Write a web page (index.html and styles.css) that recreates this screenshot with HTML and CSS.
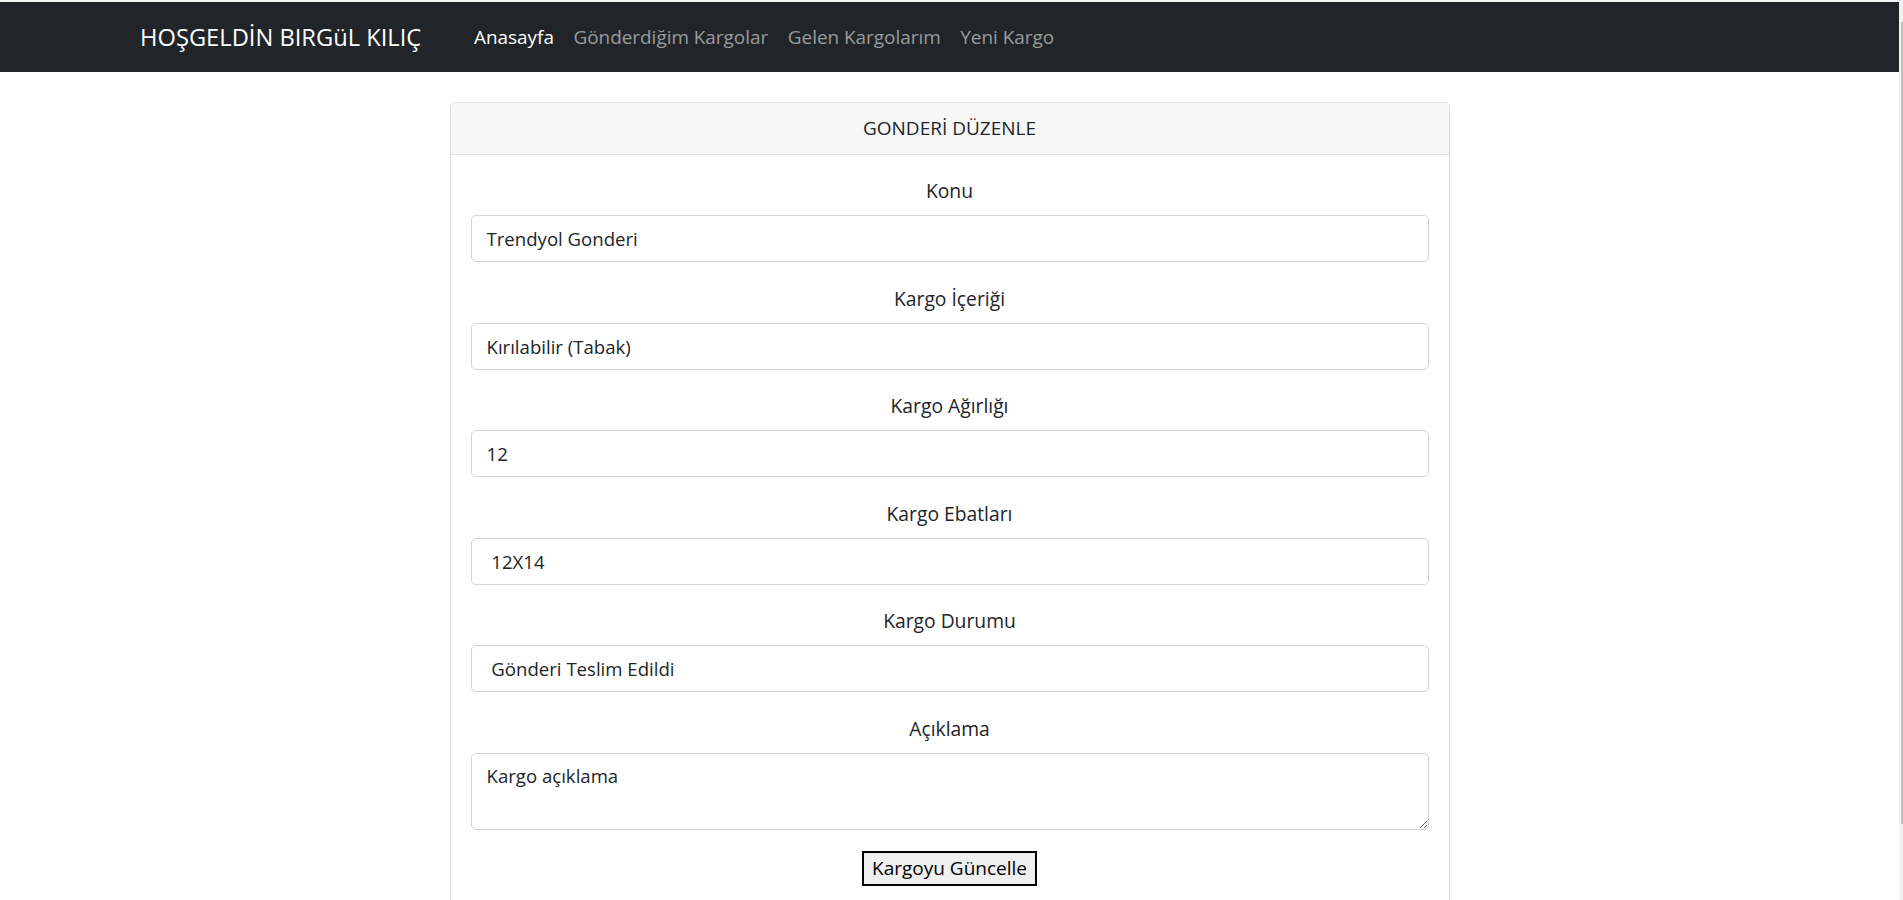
FILE: index.html
```html
<!DOCTYPE html>
<html lang="tr">
<head>
<meta charset="utf-8">
<title>Gönderi Düzenle</title>
<link rel="stylesheet" href="styles.css">
</head>
<body>
<div class="window">
  <div class="viewport">
    <div class="topstrip"></div>
    <nav class="navbar">
      <div class="container nav-inner">
        <a class="brand" href="#">HOŞGELDİN BIRGüL KILIÇ</a>
        <ul class="nav-links">
          <li><a class="nav-link active" href="#">Anasayfa</a></li>
          <li><a class="nav-link" href="#">Gönderdiğim Kargolar</a></li>
          <li><a class="nav-link" href="#">Gelen Kargolarım</a></li>
          <li><a class="nav-link" href="#">Yeni Kargo</a></li>
        </ul>
      </div>
    </nav>
    <main class="content">
      <section class="card">
        <header class="card-header">GONDERİ DÜZENLE</header>
        <form class="card-body">
          <div class="field">
            <label class="field-label">Konu</label>
            <input class="field-input" type="text" value="Trendyol Gonderi">
          </div>
          <div class="field">
            <label class="field-label">Kargo İçeriği</label>
            <input class="field-input" type="text" value="Kırılabilir (Tabak)">
          </div>
          <div class="field">
            <label class="field-label">Kargo Ağırlığı</label>
            <input class="field-input" type="text" value="12">
          </div>
          <div class="field">
            <label class="field-label">Kargo Ebatları</label>
            <input class="field-input" type="text" value=" 12X14">
          </div>
          <div class="field">
            <label class="field-label">Kargo Durumu</label>
            <input class="field-input" type="text" value=" Gönderi Teslim Edildi">
          </div>
          <div class="field">
            <label class="field-label">Açıklama</label>
            <textarea class="field-textarea">Kargo açıklama</textarea>
          </div>
          <div class="actions">
            <button class="submit" type="button">Kargoyu Güncelle</button>
          </div>
        </form>
      </section>
    </main>
  </div>
  <div class="scrollbar"><div class="thumb"></div></div>
</div>
</body>
</html>
```

FILE: styles.css
```css
* { box-sizing: border-box; }

html, body {
  margin: 0;
  padding: 0;
  height: 900px;
  overflow: hidden;
  background: #ffffff;
}

body {
  font-family: "Open Sans", "Noto Sans", sans-serif;
  font-size: 19px;
  color: #212529;
}

.window {
  display: flex;
  height: 900px;
}

.viewport {
  flex: 1;
  min-width: 0;
  background: #ffffff;
}

.topstrip {
  height: 2px;
  background: #f3f3f3;
}

.navbar {
  height: 70px;
  background: #212529;
  display: flex;
  align-items: center;
}

.container {
  width: 100%;
  max-width: 1619px;
  margin: 0 auto;
}

.nav-inner {
  display: flex;
  align-items: center;
}

.brand {
  color: #ffffff;
  text-decoration: none;
  font-size: 23.7px;
  line-height: 36px;
  margin-right: 43px;
  white-space: nowrap;
}

.nav-links {
  display: flex;
  list-style: none;
  margin: 0;
  padding: 0;
}

.nav-link {
  display: block;
  padding: 1px 9.8px 0;
  font-size: 18.9px;
  line-height: 29px;
  color: rgba(255, 255, 255, 0.55);
  text-decoration: none;
  white-space: nowrap;
}

.nav-link.active {
  color: #ffffff;
}

.content {
  padding-top: 30px;
}

.card {
  width: 1000px;
  margin: 0 auto;
  border: 1px solid #dfdfdf;
  border-radius: 5px;
  background: #ffffff;
}

.card-header {
  padding: 11px 20px;
  line-height: 29px;
  font-size: 19px;
  text-align: center;
  background: #f7f7f7;
  border-bottom: 1px solid #dfdfdf;
  border-radius: 4px 4px 0 0;
}

.card-body {
  padding: 21px 20px 40px;
  display: flex;
  flex-direction: column;
  gap: 21.5px;
}

.field {
  display: flex;
  flex-direction: column;
}

.field-label {
  text-align: center;
  font-size: 19.3px;
  line-height: 29.5px;
  margin-bottom: 9.5px;
}

.field-input,
.field-textarea {
  width: 100%;
  border: 1px solid #ced4da;
  border-radius: 5px;
  font-family: inherit;
  font-size: 18.6px;
  color: #212529;
  background: #ffffff;
  margin: 0;
}

.field-input {
  height: 47px;
  padding: 0 15px;
}

.field-textarea {
  display: block;
  height: 77px;
  padding: 7px 15px;
  line-height: 29px;
  resize: vertical;
}

.actions {
  display: flex;
  justify-content: center;
}

.submit {
  height: 35px;
  padding: 0 8.5px;
  border: 2px solid #000000;
  border-radius: 0;
  background: #efefef;
  font-family: inherit;
  font-size: 19px;
  color: #000000;
  line-height: 29px;
}

.scrollbar {
  width: 4px;
  background: #f1f1f1;
  padding-top: 22px;
  padding-left: 1.5px;
}

.thumb {
  height: 802px;
  background: #c1c1c1;
}
```
